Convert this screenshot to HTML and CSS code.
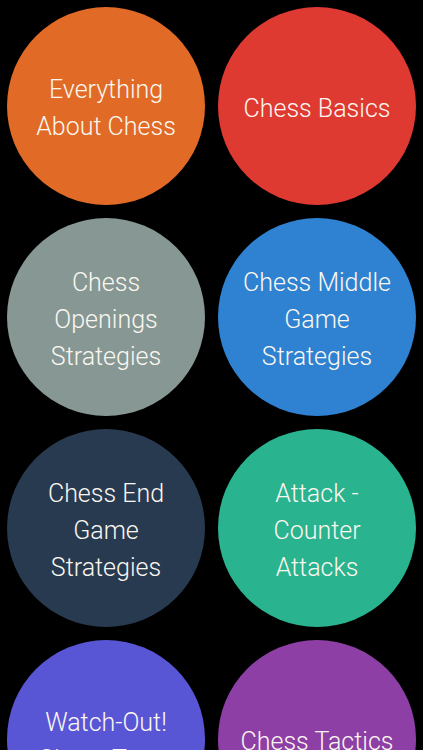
FILE: index.html
```html
<!DOCTYPE html>
<html>
<head>
<meta charset="utf-8">
<link rel="stylesheet" href="styles.css">
</head>
<body>
<div class="grid">
  <div class="circle orange"><span>Everything<br>About Chess</span></div>
  <div class="circle red"><span>Chess Basics</span></div>
  <div class="circle grey"><span>Chess<br>Openings<br>Strategies</span></div>
  <div class="circle blue"><span>Chess Middle<br>Game<br>Strategies</span></div>
  <div class="circle navy"><span>Chess End<br>Game<br>Strategies</span></div>
  <div class="circle green"><span>Attack -<br>Counter<br>Attacks</span></div>
  <div class="circle indigo"><span>Watch-Out!<br>Chess Traps</span></div>
  <div class="circle purple"><span>Chess Tactics</span></div>
</div>
</body>
</html>
```
FILE: styles.css
```css
html, body {
  margin: 0;
  padding: 0;
  background: #000;
  overflow: hidden;
  height: 750px;
}
.grid {
  display: grid;
  grid-template-columns: 198px 198px;
  column-gap: 13px;
  row-gap: 13px;
  padding: 7px;
}
.circle {
  width: 198px;
  height: 198px;
  border-radius: 50%;
  display: flex;
  align-items: center;
  justify-content: center;
  text-align: center;
  color: #fbf7f0;
  font-family: Roboto, "Liberation Sans", sans-serif;
  font-weight: 300;
  font-size: 25px;
  line-height: 37px;
}
.circle span {
  padding-top: 4px;
}
.orange { background: #e06a26; }
.red { background: #df3a32; }
.grey { background: #869794; }
.blue { background: #2f82d1; }
.navy { background: #283a4f; }
.green { background: #29b38f; }
.indigo { background: #5956d6; }
.purple { background: #8d3fa5; }
```
